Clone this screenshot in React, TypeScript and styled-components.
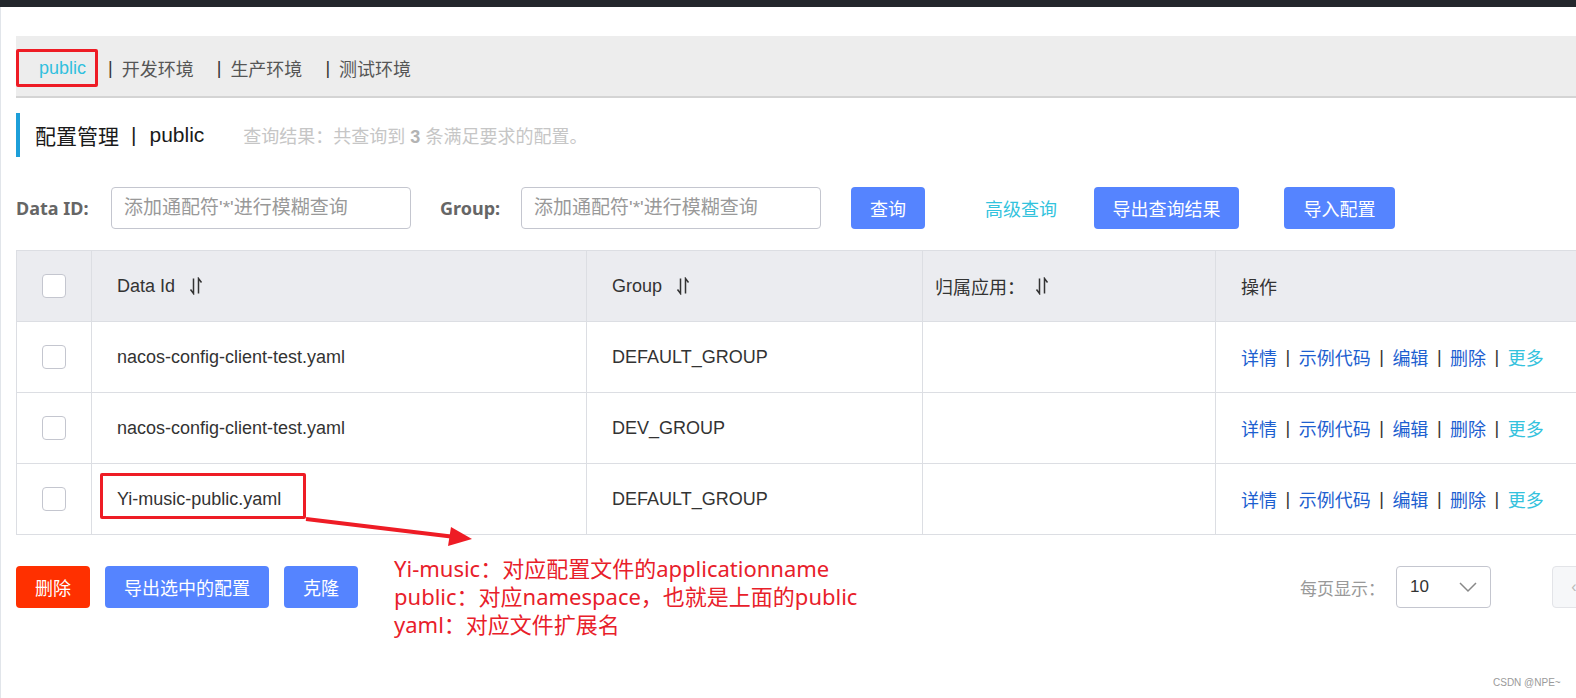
import React from "react";
import styled, { createGlobalStyle } from "styled-components";

const GlobalStyle = createGlobalStyle`
  html, body { margin: 0; padding: 0; background: #fff; overflow: hidden; }
  body { font-family: "Liberation Sans", "Noto Sans CJK SC", sans-serif; color: #333; }
  * { box-sizing: border-box; }
`;

const TopBar = styled.div`
  height: 7px;
  background: #23272c;
`;

const Page = styled.div`
  position: relative;
  width: 1720px;
  height: 691px;
  border-left: 1px solid #e1e5ea;
  padding: 29px 0 0 15px;
`;

const TabBar = styled.div`
  display: flex;
  align-items: flex-start;
  height: 62px;
  padding-top: 13px;
  background: #ededed;
  border-bottom: 2px solid #d4d4d4;
  font-size: 18px;
`;

const ActiveTab = styled.div`
  display: flex;
  align-items: center;
  width: 82px;
  height: 38px;
  padding-left: 20px;
  border: 3px solid #ee1c25;
  border-radius: 2px;
  color: #31c0de;
`;

const NsTab = styled.div`
  display: flex;
  align-items: center;
  height: 38px;
  margin-left: 10px;
  padding-right: 13px;
  color: #555;
`;

const TabSep = styled.span`
  color: #333;
  margin-right: 9px;
`;

const TitleRow = styled.div`
  display: flex;
  align-items: center;
  height: 44px;
  margin-top: 15px;
  padding-left: 15px;
  border-left: 4px solid #1d9fd9;
  font-size: 21px;
  color: #1a1a1a;
`;

const TitleSep = styled.span`
  margin: 0 13px 0 12px;
`;

const ResultHint = styled.span`
  margin-left: 39px;
  font-size: 18px;
  color: #c6c6c6;
  b { color: #b3b3b3; }
`;

const SearchRow = styled.div`
  display: flex;
  align-items: center;
  height: 42px;
  margin-top: 30px;
`;

const Label = styled.label<{ $w: number; $ml?: number }>`
  width: ${(p) => p.$w}px;
  margin-left: ${(p) => p.$ml ?? 0}px;
  font-family: "Noto Sans", "Noto Sans CJK SC", sans-serif;
  font-size: 18px;
  font-weight: bold;
  color: #666;
`;

const Input = styled.input`
  width: 300px;
  height: 42px;
  padding: 0 12px;
  border: 1px solid #c4c6cf;
  border-radius: 4px;
  font-family: inherit;
  font-size: 19px;
  color: #333;
  outline: none;
  &::placeholder { color: #999; }
`;

const Button = styled.button<{ $w: number; $ml?: number; $danger?: boolean }>`
  width: ${(p) => p.$w}px;
  height: 42px;
  margin-left: ${(p) => p.$ml ?? 0}px;
  padding: 0;
  border: none;
  border-radius: 4px;
  background: ${(p) => (p.$danger ? "#ff3000" : "#5584ff")};
  color: #fff;
  font-family: inherit;
  font-size: 18px;
  cursor: pointer;
`;

const TextLink = styled.a<{ $ml?: number }>`
  margin-left: ${(p) => p.$ml ?? 0}px;
  color: #33c3dd;
  font-size: 18px;
  text-decoration: none;
`;

const Table = styled.table`
  margin-top: 21px;
  width: 1705px;
  border-collapse: collapse;
  table-layout: fixed;
  border: 1px solid #dcdee3;
`;

const Th = styled.th<{ $w?: number; $pl?: number }>`
  ${(p) => (p.$w ? `width: ${p.$w}px;` : "")}
  height: 71px;
  padding: 0 0 0 ${(p) => p.$pl ?? 25}px;
  background: #ebecf0;
  border: 1px solid #dcdee3;
  text-align: left;
  font-weight: normal;
  font-size: 18px;
  color: #333;
`;

const CheckTh = styled(Th)`
  padding: 0;
  text-align: center;
`;

const Td = styled.td`
  height: 71px;
  padding: 0 0 0 25px;
  border: 1px solid #dcdee3;
  font-size: 18px;
  color: #333;
`;

const CheckTd = styled(Td)`
  padding: 0;
  text-align: center;
`;

const CheckBox = styled.span`
  display: inline-block;
  width: 24px;
  height: 24px;
  border: 1px solid #c4c6cf;
  border-radius: 4px;
  background: #fff;
  vertical-align: middle;
`;

const HeadCell = styled.span<{ $gap?: number }>`
  display: inline-flex;
  align-items: center;
  gap: ${(p) => p.$gap ?? 14}px;
`;

const Actions = styled.div`
  display: flex;
  align-items: center;
  font-size: 18px;
`;

const ActLink = styled.a<{ $more?: boolean }>`
  color: ${(p) => (p.$more ? "#35c2dd" : "#1d5fd0")};
  text-decoration: none;
`;

const ActSep = styled.span`
  color: #333;
  margin: 0 8.5px;
`;

const Footer = styled.div`
  display: flex;
  align-items: center;
  height: 42px;
  margin-top: 31px;
`;

const Pager = styled.div`
  display: flex;
  align-items: center;
  margin-left: 942px;
`;

const PagerLabel = styled.span`
  font-size: 17px;
  color: #999;
`;

const Select = styled.div`
  display: flex;
  align-items: center;
  justify-content: space-between;
  width: 95px;
  height: 42px;
  margin-left: 11px;
  padding: 0 13px 0 13px;
  border: 1px solid #c4c6cf;
  border-radius: 4px;
  font-size: 17px;
  color: #333;
`;

const PageBtn = styled.div`
  display: flex;
  align-items: center;
  justify-content: center;
  width: 44px;
  height: 42px;
  margin-left: 61px;
  border: 1px solid #e3e4e8;
  border-radius: 4px;
  background: #f6f7f9;
  color: #bbb;
`;

const NoteBox = styled.div`
  position: absolute;
  left: 99px;
  top: 466px;
  width: 206px;
  height: 46px;
  border: 3px solid #ee1c25;
  border-radius: 2px;
`;

const Arrow = styled.svg`
  position: absolute;
  left: 299px;
  top: 493px;
`;

const Note = styled.div`
  position: absolute;
  left: 393px;
  top: 547px;
  font-family: "Noto Sans", "Noto Sans CJK SC", sans-serif;
  font-size: 22px;
  line-height: 28px;
  color: #e8202a;
  white-space: nowrap;
`;

const Watermark = styled.div`
  position: absolute;
  left: 1492px;
  top: 670px;
  font-size: 10px;
  color: #9a9a9a;
`;

const SortIcon = () => (
  <svg width="14" height="18" viewBox="0 0 14 18">
    <path d="M4.5 1.5V16.5L1.5 12.5M9.5 16.5V1.5L12.5 5.5" fill="none" stroke="#333" strokeWidth="1.5" />
  </svg>
);

const rows = [
  { id: "nacos-config-client-test.yaml", group: "DEFAULT_GROUP" },
  { id: "nacos-config-client-test.yaml", group: "DEV_GROUP" },
  { id: "Yi-music-public.yaml", group: "DEFAULT_GROUP" },
];

export default function App() {
  return (
    <>
      <GlobalStyle />
      <TopBar />
      <Page>
        <TabBar>
          <ActiveTab>public</ActiveTab>
          {["开发环境", "生产环境", "测试环境"].map((n) => (
            <NsTab key={n}>
              <TabSep>|</TabSep>
              {n}
            </NsTab>
          ))}
        </TabBar>

        <TitleRow>
          配置管理<TitleSep>|</TitleSep>public
          <ResultHint>
            查询结果：共查询到 <b>3</b> 条满足要求的配置。
          </ResultHint>
        </TitleRow>

        <SearchRow>
          <Label $w={95}>Data ID:</Label>
          <Input placeholder="添加通配符'*'进行模糊查询" />
          <Label $w={81} $ml={29}>Group:</Label>
          <Input placeholder="添加通配符'*'进行模糊查询" />
          <Button $w={74} $ml={30}>查询</Button>
          <TextLink $ml={60}>高级查询</TextLink>
          <Button $w={145} $ml={37}>导出查询结果</Button>
          <Button $w={111} $ml={45}>导入配置</Button>
        </SearchRow>

        <Table>
          <thead>
            <tr>
              <CheckTh $w={75}><CheckBox /></CheckTh>
              <Th $w={495}><HeadCell>Data Id<SortIcon /></HeadCell></Th>
              <Th $w={336}><HeadCell>Group<SortIcon /></HeadCell></Th>
              <Th $w={293} $pl={12}><HeadCell $gap={10}>归属应用：<SortIcon /></HeadCell></Th>
              <Th>操作</Th>
            </tr>
          </thead>
          <tbody>
            {rows.map((r, i) => (
              <tr key={i}>
                <CheckTd><CheckBox /></CheckTd>
                <Td>{r.id}</Td>
                <Td>{r.group}</Td>
                <Td />
                <Td>
                  <Actions>
                    <ActLink>详情</ActLink><ActSep>|</ActSep>
                    <ActLink>示例代码</ActLink><ActSep>|</ActSep>
                    <ActLink>编辑</ActLink><ActSep>|</ActSep>
                    <ActLink>删除</ActLink><ActSep>|</ActSep>
                    <ActLink $more>更多</ActLink>
                  </Actions>
                </Td>
              </tr>
            ))}
          </tbody>
        </Table>

        <Footer>
          <Button $w={74} $danger>删除</Button>
          <Button $w={164} $ml={15}>导出选中的配置</Button>
          <Button $w={74} $ml={15}>克隆</Button>
          <Pager>
            <PagerLabel>每页显示：</PagerLabel>
            <Select>
              10
              <svg width="18" height="12" viewBox="0 0 18 12">
                <path d="M1 2L9 10L17 2" fill="none" stroke="#888" strokeWidth="1.5" />
              </svg>
            </Select>
            <PageBtn>‹</PageBtn>
          </Pager>
        </Footer>

        <NoteBox />
        <Arrow width="180" height="50" viewBox="0 0 180 50">
          <path d="M6 19L151 36.5" stroke="#ee1c25" strokeWidth="4" fill="none" />
          <path d="M172 39L148 46L151 27Z" fill="#ee1c25" />
        </Arrow>
        <Note>
          Yi-music：对应配置文件的applicationname
          <br />
          public：对应namespace，也就是上面的public
          <br />
          yaml：对应文件扩展名
        </Note>
        <Watermark>CSDN @NPE~</Watermark>
      </Page>
    </>
  );
}
